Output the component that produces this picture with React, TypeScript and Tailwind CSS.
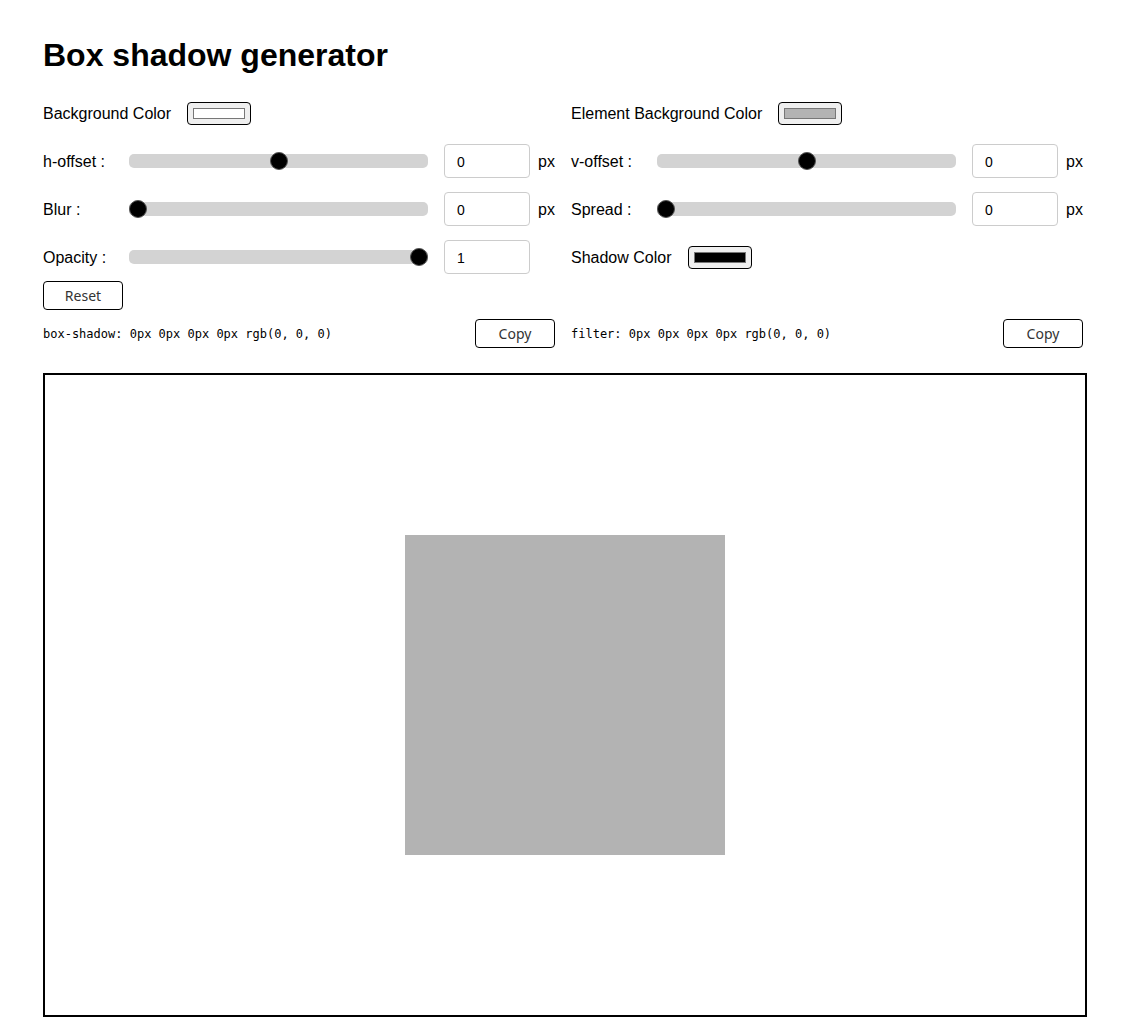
import { useState } from "react";

const sans = "font-['Liberation_Sans',Arial,sans-serif]";
const btnFont = "font-['Noto_Sans','Open_Sans',sans-serif]";

const rangeCls =
  "w-full h-[14px] appearance-none bg-[#d3d3d3] rounded-[5px] outline-none cursor-pointer " +
  "[&::-webkit-slider-thumb]:appearance-none [&::-webkit-slider-thumb]:w-[18px] [&::-webkit-slider-thumb]:h-[18px] " +
  "[&::-webkit-slider-thumb]:rounded-full [&::-webkit-slider-thumb]:bg-black [&::-webkit-slider-thumb]:border " +
  "[&::-webkit-slider-thumb]:border-[#555]";

function Swatch({ label, color }: { label: string; color: string }) {
  return (
    <div className="flex items-center h-[34px] gap-4">
      <span className="text-base pt-[2px]">{label}</span>
      <div className="w-16 h-[23px] rounded-[4px] border border-black bg-[#efefef] flex items-center justify-center">
        <div className="w-[52px] h-[11px] border border-[#777]" style={{ background: color }} />
      </div>
    </div>
  );
}

function SliderRow({
  label,
  min,
  max,
  step = 1,
  value,
  onChange,
  unit = true,
}: {
  label: string;
  min: number;
  max: number;
  step?: number;
  value: number;
  onChange: (v: number) => void;
  unit?: boolean;
}) {
  return (
    <div className="flex items-center h-[34px]">
      <span className="w-[86px] shrink-0 text-base pt-[2px]">{label}</span>
      <input
        type="range"
        min={min}
        max={max}
        step={step}
        value={value}
        onChange={(e) => onChange(Number(e.target.value))}
        className={rangeCls}
      />
      <input
        type="number"
        value={value}
        onChange={(e) => onChange(Number(e.target.value))}
        className={
          "ml-4 w-[86px] h-[34px] shrink-0 rounded-[4px] border border-[#ccc] pl-3 pt-[1px] text-[14px] outline-none [appearance:textfield] [&::-webkit-inner-spin-button]:appearance-none " +
          sans
        }
      />
      <span className={"ml-2 w-[17px] shrink-0 text-base pt-[2px] " + (unit ? "" : "invisible")}>px</span>
    </div>
  );
}

export default function App() {
  const [h, setH] = useState(0);
  const [v, setV] = useState(0);
  const [blur, setBlur] = useState(0);
  const [spread, setSpread] = useState(0);
  const [opacity, setOpacity] = useState(1);

  const reset = () => {
    setH(0);
    setV(0);
    setBlur(0);
    setSpread(0);
    setOpacity(1);
  };

  const shadow = `${h}px ${v}px ${blur}px ${spread}px rgb(0, 0, 0)`;

  return (
    <div className={"min-h-screen bg-white text-black pl-[43px] pt-[37px] pb-4 " + sans}>
      <div className="w-[1044px]">
        <h1 className="text-[32px] leading-[37px] font-bold mb-[22px]">Box shadow generator</h1>

        <div className="grid grid-cols-2 gap-x-4 w-[1040px]">
          <div className="flex flex-col gap-[14px]">
            <Swatch label="Background Color" color="#ffffff" />
            <SliderRow label="h-offset :" min={-50} max={50} value={h} onChange={setH} />
            <SliderRow label="Blur :" min={0} max={100} value={blur} onChange={setBlur} />
            <SliderRow label="Opacity :" min={0} max={1} step={0.01} value={opacity} onChange={setOpacity} unit={false} />
          </div>
          <div className="flex flex-col gap-[14px]">
            <Swatch label="Element Background Color" color="#b3b3b3" />
            <SliderRow label="v-offset :" min={-50} max={50} value={v} onChange={setV} />
            <SliderRow label="Spread :" min={0} max={100} value={spread} onChange={setSpread} />
            <Swatch label="Shadow Color" color="#000000" />
          </div>
        </div>

        <button
          onClick={reset}
          className={"mt-[7px] w-20 h-[29px] rounded-[4px] border border-black bg-white text-sm text-[#333] " + btnFont}
        >
          Reset
        </button>

        <div className="grid grid-cols-2 gap-x-4 w-[1040px] mt-[9px]">
          <div className="flex items-center justify-between">
            <code className="font-['DejaVu_Sans_Mono',monospace] text-xs">box-shadow: {shadow}</code>
            <button className={"w-20 h-[29px] rounded-[4px] border border-black bg-white text-sm text-[#333] " + btnFont}>
              Copy
            </button>
          </div>
          <div className="flex items-center justify-between">
            <code className="font-['DejaVu_Sans_Mono',monospace] text-xs">filter: {shadow}</code>
            <button className={"w-20 h-[29px] rounded-[4px] border border-black bg-white text-sm text-[#333] " + btnFont}>
              Copy
            </button>
          </div>
        </div>

        <div className="mt-[25px] h-[644px] border-2 border-black bg-white flex items-center justify-center">
          <div
            className="w-[320px] h-[320px] bg-[#b3b3b3]"
            style={{ boxShadow: `${h}px ${v}px ${blur}px ${spread}px rgba(0,0,0,${opacity})` }}
          />
        </div>
      </div>
    </div>
  );
}
